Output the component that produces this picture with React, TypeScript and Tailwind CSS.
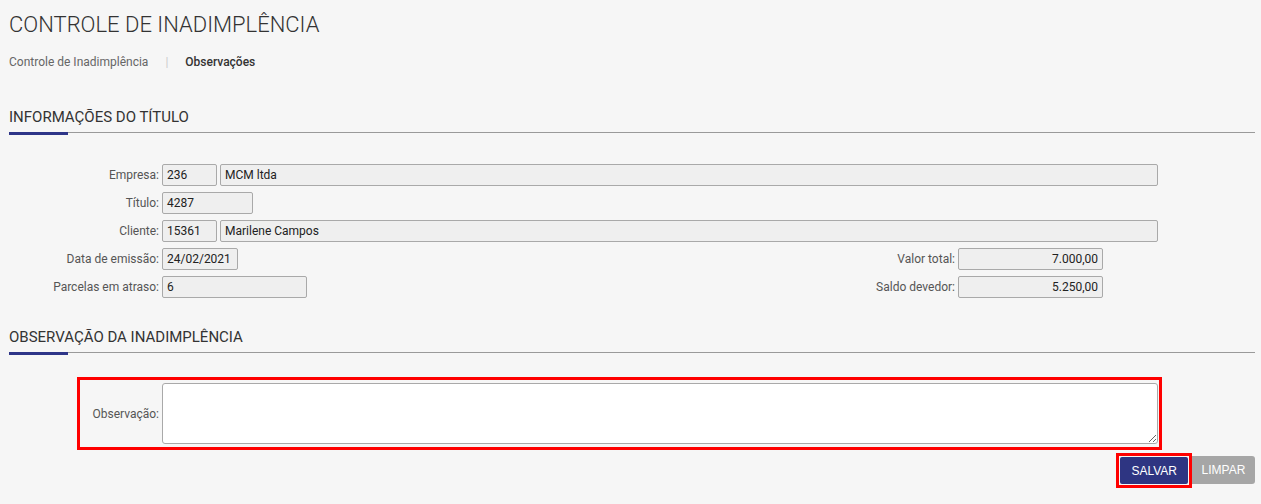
import React from "react";

const font = { fontFamily: "Roboto, 'Noto Sans', sans-serif" };

function Field({ value, w, right }: { value: string; w: string; right?: boolean }) {
  return (
    <div
      className={`${w} h-[22px] border border-[#a9a9a9] bg-[#efefef] rounded-[2px] px-[4px] text-[12px] leading-[20px] text-[#222] ${right ? "text-right" : ""}`}
    >
      {value}
    </div>
  );
}

function Label({ children, w = "w-[153px]" }: { children: React.ReactNode; w?: string }) {
  return <div className={`${w} shrink-0 text-right pr-[3px] text-[12px] leading-[22px] text-[#555]`}>{children}</div>;
}

function SectionHeader({ title, className }: { title: string; className: string }) {
  return (
    <div className={`relative border-b border-[#9a9a9a] pb-[5px] ${className}`}>
      <h2 className="text-[15px] leading-[20px] text-[#333] font-normal">{title}</h2>
      <div className="absolute left-0 bottom-[-3px] h-[3px] w-[59px] bg-[#2e3588]" />
    </div>
  );
}

export default function App() {
  return (
    <div className="min-h-screen bg-[#f6f6f6] pl-[9px] pr-[6px] pb-4" style={font}>
      <h1 className="pt-[12px] text-[22px] leading-[26px] font-light text-[#333]">
        CONTROLE DE INADIMPLÊNCIA
      </h1>

      <div className="mt-[16px] flex items-center text-[12px] leading-[16px]">
        <span className="text-[#666]">Controle de Inadimplência</span>
        <span className="mx-[17px] text-[#ccc]">|</span>
        <span className="font-medium text-[#333]">Observações</span>
      </div>

      <SectionHeader title="INFORMAÇÕES DO TÍTULO" className="mt-[37px]" />

      <div className="mt-[31px] flex flex-col gap-[6px] pr-[97px]">
        <div className="flex">
          <Label>Empresa:</Label>
          <Field value="236" w="w-[55px]" />
          <div className="flex-1 ml-[3px]">
            <Field value="MCM ltda" w="w-full" />
          </div>
        </div>
        <div className="flex">
          <Label>Título:</Label>
          <Field value="4287" w="w-[91px]" />
        </div>
        <div className="flex">
          <Label>Cliente:</Label>
          <Field value="15361" w="w-[55px]" />
          <div className="flex-1 ml-[3px]">
            <Field value="Marilene Campos" w="w-full" />
          </div>
        </div>
        <div className="flex">
          <Label>Data de emissão:</Label>
          <Field value="24/02/2021" w="w-[76px]" />
          <div className="flex-1" />
          <Label w="w-[120px]">Valor total:</Label>
          <Field value="7.000,00" w="w-[145px]" right />
          <div className="w-[55px]" />
        </div>
        <div className="flex">
          <Label>Parcelas em atraso:</Label>
          <Field value="6" w="w-[145px]" />
          <div className="flex-1" />
          <Label w="w-[120px]">Saldo devedor:</Label>
          <Field value="5.250,00" w="w-[145px]" right />
          <div className="w-[55px]" />
        </div>
      </div>

      <SectionHeader title="OBSERVAÇÃO DA INADIMPLÊNCIA" className="mt-[29px]" />

      <div className="mt-[24px] ml-[68px] mr-[93px] border-[3px] border-[#f00] flex items-center pt-[3px] pb-[3px] pr-[1px]">
        <Label w="w-[82px]">Observação:</Label>
        <textarea className="flex-1 h-[61px] bg-white border border-[#a9a9a9] rounded-[3px] text-[12px] p-1 outline-none" />
      </div>

      <div className="mt-[3px] flex justify-end items-start" style={{ fontFamily: "'Liberation Sans', Arial, sans-serif" }}>
        <div className="border-[3px] border-[#f00] p-px">
          <button className="h-[27px] px-[11px] bg-[#2e3582] text-white text-[12px] rounded-[2px]">
            SALVAR
          </button>
        </div>
        <button className="mt-[3px] h-[28px] w-[63px] bg-[#a6a6a6] text-white text-[12px] rounded-r-[3px]">
          LIMPAR
        </button>
      </div>
    </div>
  );
}
